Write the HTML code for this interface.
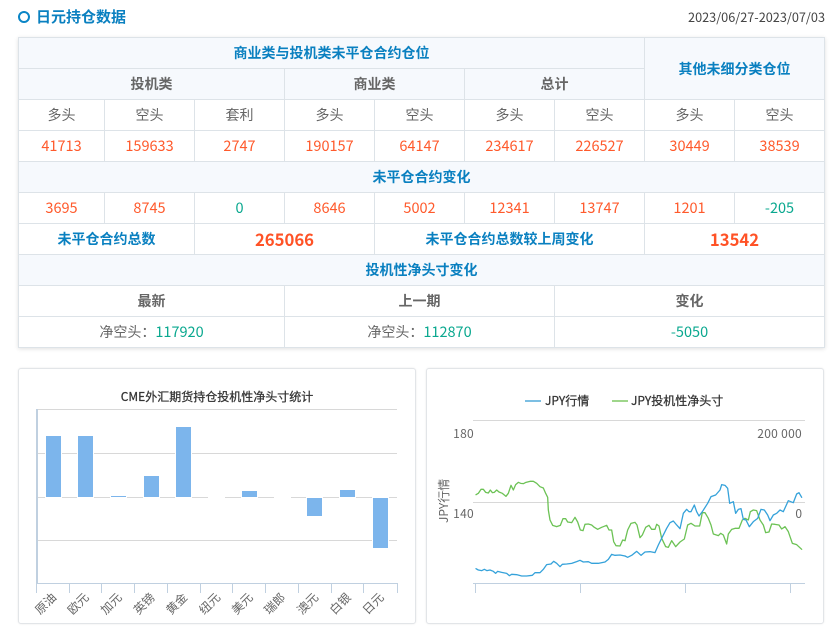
<!DOCTYPE html>
<html lang="zh">
<head>
<meta charset="utf-8">
<title>日元持仓数据</title>
<style>
html,body{margin:0;padding:0;background:#fff;}
body{position:relative;width:830px;height:626px;overflow:hidden;font-family:"Noto Sans CJK SC","Liberation Sans",sans-serif;color:#666;}
.ring{position:absolute;left:18px;top:11px;width:12px;height:12px;box-sizing:border-box;border:2.5px solid #0a85c6;border-radius:50%;}
.title{position:absolute;left:36px;top:7px;font-size:15px;line-height:20px;font-weight:bold;color:#0a80c0;white-space:nowrap;}
.date{position:absolute;right:5px;top:8px;font-size:12.7px;line-height:18px;color:#444;white-space:nowrap;}
table{position:absolute;left:18px;top:37px;border-collapse:separate;border-spacing:0;table-layout:fixed;width:807px;border-left:1px solid #dde3e8;border-top:1px solid #dde3e8;box-shadow:0 1px 4px rgba(0,0,0,.12);font-size:14px;}
td{box-sizing:border-box;height:31px;padding:0;text-align:center;vertical-align:middle;border-right:1px solid #dde3e8;border-bottom:1px solid #dde3e8;line-height:20px;color:#666;background:#fff;}
.h{background:#f6f9fd;}
.b{font-weight:bold;color:#0a80c0;}
.g{font-weight:bold;color:#666;}
.r{color:#ff5a2c;font-size:14.5px;}
.n{color:#0aa88f;font-size:14.5px;}
.c{font-family:"Noto Sans CJK TC",sans-serif;}
.big{font-weight:bold;font-size:16.7px;color:#ff5226;}
.card{position:absolute;top:368px;height:256px;box-sizing:border-box;border:1px solid #e2e5e8;border-radius:3px;box-shadow:0 0 2px rgba(0,0,0,.08);background:#fff;}
svg{position:absolute;left:0;top:0;}
svg text{font-family:"Noto Sans CJK SC","Liberation Sans",sans-serif;}
</style>
</head>
<body>
<div class="ring"></div>
<div class="title">日元持仓数据</div>
<div class="date">2023/06/27-2023/07/03</div>

<table>
<colgroup><col style="width:86px"><col style="width:90px"><col style="width:90px"><col style="width:90px"><col style="width:90px"><col style="width:90px"><col style="width:90px"><col style="width:90px"><col style="width:90px"></colgroup>
<tr><td colspan="7" class="h b">商业类与投机类未平仓合约仓位</td><td colspan="2" rowspan="2" class="h b">其他未细分类仓位</td></tr>
<tr><td colspan="3" class="h g">投机类</td><td colspan="2" class="h g">商业类</td><td colspan="2" class="h g">总计</td></tr>
<tr><td>多头</td><td>空头</td><td>套利</td><td>多头</td><td>空头</td><td>多头</td><td>空头</td><td>多头</td><td>空头</td></tr>
<tr><td class="r">41713</td><td class="r">159633</td><td class="r">2747</td><td class="r">190157</td><td class="r">64147</td><td class="r">234617</td><td class="r">226527</td><td class="r">30449</td><td class="r">38539</td></tr>
<tr><td colspan="9" class="h b">未平仓合约变化</td></tr>
<tr><td class="r">3695</td><td class="r">8745</td><td class="n">0</td><td class="r">8646</td><td class="r">5002</td><td class="r">12341</td><td class="r">13747</td><td class="r">1201</td><td class="n">-205</td></tr>
<tr><td colspan="2" class="b">未平仓合约总数</td><td colspan="2" class="big">265066</td><td colspan="3" class="b">未平仓合约总数较上周变化</td><td colspan="2" class="big">13542</td></tr>
<tr><td colspan="9" class="h b">投机性净头寸变化</td></tr>
<tr><td colspan="3" class="g">最新</td><td colspan="3" class="g">上一期</td><td colspan="3" class="g">变化</td></tr>
<tr><td colspan="3">净空头<span class="c">：</span><span class="n">117920</span></td><td colspan="3">净空头<span class="c">：</span><span class="n">112870</span></td><td colspan="3"><span class="n">-5050</span></td></tr>
</table>

<div class="card" style="left:18px;width:398px;"></div>
<div class="card" style="left:426px;width:398px;"></div>

<svg width="830" height="626" viewBox="0 0 830 626" xmlns="http://www.w3.org/2000/svg">
  <!-- Bar chart -->
  <text x="217" y="401" font-size="12" fill="#333" stroke="#333" stroke-width=".25" text-anchor="middle">CME外汇期货持仓投机性净头寸统计</text>
  <g stroke="#d8d8d8" stroke-width="1" shape-rendering="crispEdges">
    <line x1="37" y1="409.5" x2="397" y2="409.5"/>
    <line x1="37" y1="453.5" x2="397" y2="453.5"/>
    <line x1="37" y1="497.5" x2="397" y2="497.5"/>
    <line x1="37" y1="540.5" x2="397" y2="540.5"/>
  </g>
  <g fill="#7cb5ec" stroke="#fff" stroke-width="1" shape-rendering="crispEdges">
    <rect x="45.5" y="435.5" width="16" height="62"/>
    <rect x="77.5" y="435.5" width="16" height="62"/>
    <rect x="110.5" y="495.5" width="16" height="2"/>
    <rect x="143.5" y="475.5" width="16" height="22"/>
    <rect x="175.5" y="426.5" width="16" height="71"/>
    <rect x="241.5" y="490.5" width="16" height="7"/>
    <rect x="306.5" y="497.5" width="16" height="19"/>
    <rect x="339.5" y="489.5" width="16" height="8"/>
    <rect x="372.5" y="497.5" width="16" height="51"/>
  </g>
  <g stroke="#fff" stroke-width="1" shape-rendering="crispEdges">
    <line x1="208" y1="497.5" x2="225" y2="497.5"/>
    <line x1="274" y1="497.5" x2="291" y2="497.5"/>
  </g>
  <g stroke="#c0d0e0" stroke-width="1" shape-rendering="crispEdges">
    <line x1="36" y1="583.5" x2="398" y2="583.5"/>
    <line x1="36.5" y1="583" x2="36.5" y2="593"/>
    <line x1="69.5" y1="583" x2="69.5" y2="593"/>
    <line x1="101.5" y1="583" x2="101.5" y2="593"/>
    <line x1="134.5" y1="583" x2="134.5" y2="593"/>
    <line x1="167.5" y1="583" x2="167.5" y2="593"/>
    <line x1="200.5" y1="583" x2="200.5" y2="593"/>
    <line x1="232.5" y1="583" x2="232.5" y2="593"/>
    <line x1="265.5" y1="583" x2="265.5" y2="593"/>
    <line x1="298.5" y1="583" x2="298.5" y2="593"/>
    <line x1="331.5" y1="583" x2="331.5" y2="593"/>
    <line x1="363.5" y1="583" x2="363.5" y2="593"/>
    <line x1="397.5" y1="583" x2="397.5" y2="593"/>
  </g>
  <rect x="36" y="409" width="2" height="175" fill="#c0d0e0"/>
  <g font-size="12" fill="#666" text-anchor="middle">
    <text transform="translate(46.5,604.5) rotate(-45)" y="3">原油</text>
    <text transform="translate(79,604.5) rotate(-45)" y="3">欧元</text>
    <text transform="translate(112,604.5) rotate(-45)" y="3">加元</text>
    <text transform="translate(145,604.5) rotate(-45)" y="3">英镑</text>
    <text transform="translate(177.5,604.5) rotate(-45)" y="3">黄金</text>
    <text transform="translate(210.5,604.5) rotate(-45)" y="3">纽元</text>
    <text transform="translate(243,604.5) rotate(-45)" y="3">美元</text>
    <text transform="translate(275.5,604.5) rotate(-45)" y="3">瑞郎</text>
    <text transform="translate(308.5,604.5) rotate(-45)" y="3">澳元</text>
    <text transform="translate(341,604.5) rotate(-45)" y="3">白银</text>
    <text transform="translate(374,604.5) rotate(-45)" y="3">日元</text>
  </g>

  <!-- Line chart -->
  <line x1="525" y1="401" x2="541" y2="401" stroke="#7cbfe3" stroke-width="2"/>
  <text x="545" y="405" font-size="12" fill="#333" stroke="#333" stroke-width=".25">JPY行情</text>
  <line x1="612" y1="401" x2="628" y2="401" stroke="#9fd68b" stroke-width="2"/>
  <text x="631" y="405" font-size="12" fill="#333" stroke="#333" stroke-width=".25">JPY投机性净头寸</text>
  <g stroke="#d8d8d8" stroke-width="1" shape-rendering="crispEdges">
    <line x1="473" y1="420.5" x2="805" y2="420.5"/>
    <line x1="473" y1="502.5" x2="805" y2="502.5"/>
  </g>
  <g stroke="#c0d0e0" stroke-width="1" shape-rendering="crispEdges">
    <line x1="473" y1="583.5" x2="805" y2="583.5"/>
    <line x1="475.5" y1="583" x2="475.5" y2="593"/>
    <line x1="580.5" y1="583" x2="580.5" y2="593"/>
    <line x1="685.5" y1="583" x2="685.5" y2="593"/>
    <line x1="790.5" y1="583" x2="790.5" y2="593"/>
  </g>
  <g font-size="12" fill="#666">
    <text x="474" y="438" text-anchor="end" letter-spacing=".3">180</text>
    <text x="474" y="518" text-anchor="end" letter-spacing=".3">140</text>
    <text x="802" y="438" text-anchor="end" letter-spacing=".3">200 000</text>
    <text x="802" y="518" text-anchor="end">0</text>
    <text transform="translate(448,523) rotate(-90)">JPY行情</text>
  </g>
  <g fill="none" stroke="#6cc255" stroke-width="1.3" stroke-linejoin="round" stroke-linecap="round">
    <polyline vector-effect="non-scaling-stroke" transform="translate(425,470) scale(.33333)" points="153,74 160,70 168,58 175,58 182,67 190,69 196,60 202,68 208,67 215,60 222,66 232,70 243,79 250,70 258,46 265,60 272,44 280,37 287,40 295,41 303,37 315,34 325,34 335,40 345,50 355,54 362,70 368,82 370,120 375,150 383,166 395,170 406,166 414,146 422,146 428,156 440,158 450,142 458,156 466,180 474,182 480,163 490,162 500,165 508,172 518,178 530,172 545,166 552,180 560,180 566,215 573,227 585,228 593,210 600,212"/>
    <polyline vector-effect="non-scaling-stroke" transform="translate(625,470) scale(.33333)" points="0,212 8,180 18,160 30,157 36,165 45,203 52,195 62,172 72,166 80,178 90,178 95,163 102,168 110,205 122,230 130,232 140,212 152,230 165,216 178,207 188,165 198,160 210,168 224,168 232,128 240,128 250,145 258,165 265,192 280,197 287,190 295,195 305,222 310,192 320,178 330,175 342,175 352,150 360,145 370,150 376,125 385,120 395,122 405,150 415,165 422,188 432,186 440,162 450,163 462,165 470,177 480,170 490,185 502,220 515,224 530,238"/>
  </g>
  <g fill="none" stroke="#35a2da" stroke-width="1.3" stroke-linejoin="round" stroke-linecap="round">
    <polyline vector-effect="non-scaling-stroke" transform="translate(425,470) scale(.33333)" points="153,296 160,300 170,302 178,298 186,302 195,300 205,304 212,310 218,304 230,307 245,310 253,317 260,313 275,314 290,318 305,318 322,316 330,308 345,308 355,298 365,284 378,282 386,274 395,280 405,290 412,283 425,282 440,280 455,275 465,271 475,276 490,275 500,280 520,280 540,276 550,268 560,253 570,256 585,255 600,258"/>
    <polyline vector-effect="non-scaling-stroke" transform="translate(625,470) scale(.33333)" points="0,258 8,262 20,256 35,244 48,256 60,246 75,245 90,248 100,225 110,205 125,175 135,158 145,153 155,165 165,176 175,130 185,118 192,125 198,125 208,105 215,125 222,138 232,125 248,100 258,80 272,75 285,60 290,44 300,46 308,55 314,100 325,95 332,130 340,118 348,116 355,148 363,150 373,170 385,155 398,145 408,118 418,120 428,135 435,152 445,135 455,130 465,120 475,125 490,92 505,98 515,72 522,68 530,82"/>
  </g>
</svg>
</body>
</html>
